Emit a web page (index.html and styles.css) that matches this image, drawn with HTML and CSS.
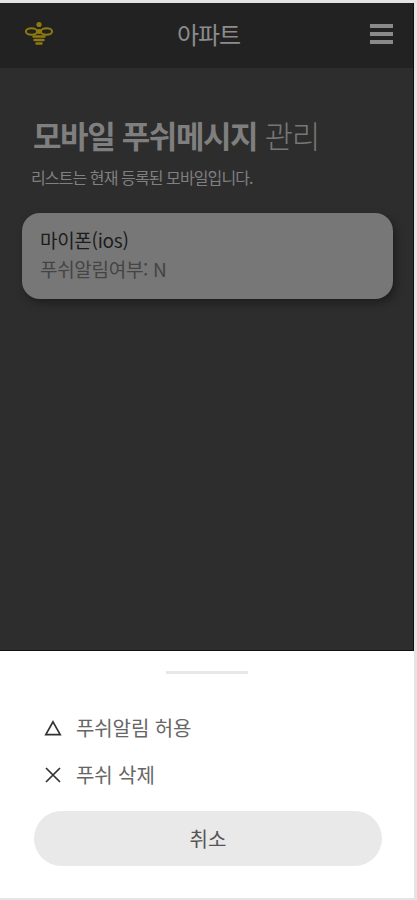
FILE: index.html
```html
<!DOCTYPE html>
<html lang="ko">
<head>
    <meta charset="UTF-8">
    <meta name="viewport" content="width=device-width, initial-scale=1.0">
    <title>아파트</title>
    <link rel="stylesheet" href="styles.css">
</head>
<body>
    <div class="screen">
        <header class="topbar">
            <svg class="logo" width="30" height="28" viewBox="0 0 30 28" fill="none" stroke="#8f7a0e">
                <circle cx="15" cy="4.5" r="2.6" fill="#8f7a0e" stroke="none"/>
                <ellipse cx="7.5" cy="11.5" rx="5.6" ry="3.2" stroke-width="2"/>
                <ellipse cx="22.5" cy="11.5" rx="5.6" ry="3.2" stroke-width="2"/>
                <ellipse cx="15" cy="11.5" rx="3" ry="2.4" fill="#8f7a0e" stroke="none"/>
                <path d="M9.5 16.5h11M10.5 20h9M12.5 23.5h5" stroke-width="2.4" stroke-linecap="round"/>
            </svg>
            <div class="topbar-title">아파트</div>
            <div class="menu-btn">
                <span></span>
                <span></span>
                <span></span>
            </div>
        </header>

        <main class="content">
            <h1 class="page-title"><strong>모바일 푸쉬메시지</strong> 관리</h1>
            <p class="page-desc">리스트는 현재 등록된 모바일입니다.</p>

            <div class="device-card">
                <div class="device-name">마이폰(ios)</div>
                <div class="device-push">푸쉬알림여부: N</div>
            </div>
        </main>
    </div>

    <div class="sheet">
        <div class="sheet-handle"></div>
        <ul class="sheet-menu">
            <li class="sheet-item">
                <svg width="18" height="16" viewBox="0 0 18 16" fill="none" stroke="#333" stroke-width="1.7">
                    <path d="M9 1.8 L16.2 14.6 H1.8 Z"/>
                </svg>
                <span>푸쉬알림 허용</span>
            </li>
            <li class="sheet-item">
                <svg width="18" height="16" viewBox="0 0 18 16" fill="none" stroke="#333" stroke-width="1.7">
                    <path d="M2 1 L16 15 M16 1 L2 15"/>
                </svg>
                <span>푸쉬 삭제</span>
            </li>
        </ul>
        <button class="cancel-btn">취소</button>
    </div>
</body>
</html>
```

FILE: styles.css
```css
html, body {
    margin: 0;
    padding: 0;
}

body {
    width: 417px;
    height: 900px;
    box-sizing: border-box;
    padding: 3px 3px 2px 0;
    overflow: hidden;
    background-color: #e4e4e4;
    font-family: "Noto Sans CJK KR", "Noto Sans", sans-serif;
    color: #555;
}

.screen {
    height: 648px;
    display: flex;
    flex-direction: column;
    background-color: #2d2d2d;
    border-right: 1px solid #111;
    border-bottom: 1px solid #111;
    box-sizing: border-box;
}

.topbar {
    height: 65px;
    box-sizing: border-box;
    flex-shrink: 0;
    display: grid;
    grid-template-columns: 1fr auto 1fr;
    align-items: center;
    padding: 0 20px 4px 24px;
    background-color: #222;
}

.logo {
    display: block;
    margin-top: 1px;
}

.topbar-title {
    font-size: 24px;
    line-height: 34px;
    letter-spacing: -1px;
    color: #8c8c8c;
}

.menu-btn {
    width: 23px;
    justify-self: end;
    display: flex;
    flex-direction: column;
    gap: 4px;
}

.menu-btn span {
    height: 4px;
    background-color: #8a8a8a;
}

.content {
    padding: 45px 20px 0 22px;
}

.page-title {
    margin: 0 0 0 11px;
    font-size: 31px;
    line-height: 44px;
    font-weight: 300;
    letter-spacing: -1.4px;
    color: #777;
}

.page-title strong {
    font-weight: 700;
    color: #7f7f7f;
}

.page-desc {
    margin: 9px 0 0 9px;
    font-size: 16px;
    line-height: 22px;
    letter-spacing: -0.9px;
    color: #808080;
}

.device-card {
    margin-top: 25px;
    height: 86px;
    box-sizing: border-box;
    padding: 13px 18px;
    background-color: #777;
    border-radius: 18px;
    box-shadow: 3px 4px 8px rgba(0, 0, 0, 0.35);
}

.device-name {
    font-size: 19px;
    line-height: 28px;
    letter-spacing: -0.3px;
    color: #1c1c1c;
}

.device-push {
    font-size: 19px;
    line-height: 30px;
    letter-spacing: -0.3px;
    color: #444;
}

.sheet {
    height: 247px;
    box-sizing: border-box;
    padding-top: 20px;
    background-color: #fff;
}

.sheet-handle {
    width: 82px;
    height: 3px;
    margin: 0 auto;
    background-color: #e8e8e8;
}

.sheet-menu {
    list-style: none;
    margin: 30px 0 0;
    padding: 0 0 0 44px;
}

.sheet-item {
    height: 47px;
    display: flex;
    align-items: center;
    gap: 14px;
    font-size: 20px;
    letter-spacing: -0.1px;
    color: #666;
}

.sheet-item svg {
    flex-shrink: 0;
}

.cancel-btn {
    display: block;
    width: 348px;
    height: 55px;
    margin: 13px 0 0 34px;
    border: none;
    border-radius: 28px;
    background-color: #e9e9e9;
    font-family: inherit;
    font-size: 20px;
    color: #555;
}
```
